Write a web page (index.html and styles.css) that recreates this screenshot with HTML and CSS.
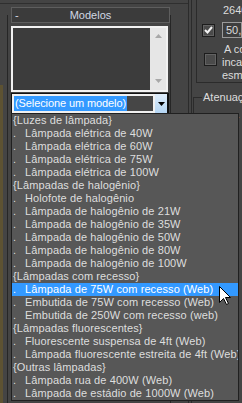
FILE: index.html
```html
<!DOCTYPE html>
<html>
<head>
<meta charset="utf-8">
<link rel="stylesheet" href="styles.css">
</head>
<body>
<div class="app">
  <div class="left-area">
    <div class="topbar"></div>
    <div class="left-body">
      <div class="edge"></div>
      <div class="rollout">
        <div class="roll-head"><span class="minus">-</span><span class="title">Modelos</span><span></span></div>
        <div class="roll-frame">
          <div class="listbox">
            <div class="lb-scroll">
              <svg width="7" height="4" viewBox="0 0 7 4"><path d="M0 4 L3.5 0 L7 4 Z" fill="#a8a8a8"/></svg>
              <svg width="7" height="4" viewBox="0 0 7 4"><path d="M0 0 L7 0 L3.5 4 Z" fill="#a8a8a8"/></svg>
            </div>
          </div>
          <div class="combo">
            <div class="combo-field"><span class="combo-sel">(Selecione um modelo)</span></div>
            <div class="combo-btn"><svg width="7" height="4" viewBox="0 0 7 4"><path d="M0 0 L7 0 L3.5 4 Z" fill="#000"/></svg></div>
          </div>
        </div>
      </div>
    </div>
  </div>
  <div class="side">
    <div class="side-inner">
      <div class="grp1">
        <div class="val">2640</div>
        <div class="row-a">
          <span class="chk on"><svg width="9" height="8" viewBox="0 0 9 8"><path d="M1 4 L3.5 6.5 L8 1" fill="none" stroke="#f4f4f4" stroke-width="2"/></svg></span>
          <span class="input">50,0</span>
        </div>
        <div class="lbl-a">A cor</div>
        <div class="row-b">
          <span class="chk"></span>
          <span class="lbl-b">incandescente<br>esmaecer</span>
        </div>
      </div>
      <div class="grp2">
        <span class="legend">Atenuação</span>
        <div class="row-c"><span class="chk"></span><span class="usar">Usar</span></div>
      </div>
    </div>
  </div>
</div>

<div class="dropdown">
  <div class="item grp">{Luzes de lâmpada}</div>
  <div class="item"><span class="dot">.</span>Lâmpada elétrica de 40W</div>
  <div class="item"><span class="dot">.</span>Lâmpada elétrica de 60W</div>
  <div class="item"><span class="dot">.</span>Lâmpada elétrica de 75W</div>
  <div class="item"><span class="dot">.</span>Lâmpada elétrica de 100W</div>
  <div class="item grp">{Lâmpadas de halogênio}</div>
  <div class="item"><span class="dot">.</span>Holofote de halogênio</div>
  <div class="item"><span class="dot">.</span>Lâmpada de halogênio de 21W</div>
  <div class="item"><span class="dot">.</span>Lâmpada de halogênio de 35W</div>
  <div class="item"><span class="dot">.</span>Lâmpada de halogênio de 50W</div>
  <div class="item"><span class="dot">.</span>Lâmpada de halogênio de 80W</div>
  <div class="item"><span class="dot">.</span>Lâmpada de halogênio de 100W</div>
  <div class="item grp">{Lâmpadas com recesso}</div>
  <div class="item sel"><span class="dot">.</span>Lâmpada de 75W com recesso (Web)</div>
  <div class="item"><span class="dot">.</span>Embutida de 75W com recesso (Web)</div>
  <div class="item"><span class="dot">.</span>Embutida de 250W com recesso (web)</div>
  <div class="item grp">{Lâmpadas fluorescentes}</div>
  <div class="item"><span class="dot">.</span>Fluorescente suspensa de 4ft (Web)</div>
  <div class="item"><span class="dot">.</span>Lâmpada fluorescente estreita de 4ft (Web)</div>
  <div class="item grp">{Outras lâmpadas}</div>
  <div class="item"><span class="dot">.</span>Lâmpada rua de 400W (Web)</div>
  <div class="item"><span class="dot">.</span>Lâmpada de estádio de 1000W (Web)</div>
</div>

<svg class="cursor" width="13" height="20" viewBox="0 0 13 20">
  <path d="M0.5 0.5 L0.5 16.5 L4.5 12.5 L7.5 18.5 L9.5 17.5 L6.5 11.5 L11.5 11.5 Z" fill="#fff" stroke="#000" stroke-width="1" stroke-linejoin="miter"/>
</svg>
</body>
</html>
```

FILE: styles.css
```css
* { box-sizing: border-box; }
html, body { margin: 0; padding: 0; }
body {
  width: 242px;
  height: 403px;
  overflow: hidden;
  position: relative;
  background: #444444;
  font-family: "Liberation Sans", Arial, sans-serif;
  font-size: 11px;
  line-height: 13px;
  color: #dcdcdc;
}
.app { display: flex; height: 403px; width: 242px; overflow: hidden; }

.left-area { width: 188px; flex: none; display: flex; flex-direction: column; }
.topbar { height: 4px; border-bottom: 1px solid #2f2f2f; }
.left-body { display: flex; flex: 1; }
.edge {
  width: 3px;
  flex: none;
  background: linear-gradient(#444444 0 81px, #5d5232 81px);
}
.rollout { margin-left: 4px; width: 164px; flex: none; padding-top: 3px; }
.roll-head {
  position: relative;
  z-index: 1;
  margin-left: 4px;
  width: 159px;
  height: 16px;
  border: 1px solid #5e5e5e;
  background: #3b3b3b;
  display: grid;
  grid-template-columns: 1fr auto 1fr;
  align-items: center;
  color: #d2d8e4;
  line-height: 13px;
}
.minus { padding-left: 3px; }
.roll-frame {
  margin-top: -8px;
  height: 388px;
  border-left: 1px solid #262626;
  border-right: 1px solid #262626;
  padding: 11px 0 0 3px;
}
.listbox {
  width: 157px;
  height: 66px;
  border: 2px solid #f2f2f2;
  background: #3c3c3c;
  display: flex;
  justify-content: flex-end;
}
.lb-scroll {
  width: 16px;
  background: #e6e6e6;
  display: flex;
  flex-direction: column;
  justify-content: space-between;
  align-items: center;
  padding: 6px 0 7px;
}
.lb-scroll svg { display: block; }
.combo {
  margin-top: 1px;
  width: 158px;
  height: 21px;
  display: flex;
  border: 1px solid #111111;
  border-right-width: 2px;
}
.combo-field {
  flex: 1;
  border: 2px solid #f0f0f0;
  background: #464646;
  display: flex;
  align-items: stretch;
}
.combo-sel {
  background: #3399ff;
  color: #ffffff;
  padding: 0 1px;
  line-height: 15px;
  letter-spacing: -0.1px;
  white-space: nowrap;
}
.combo-btn {
  width: 12px;
  background: linear-gradient(#e0eefb, #b4d5f3);
  display: flex;
  align-items: center;
  justify-content: center;
}
.combo-btn svg { display: block; }

.side { flex: 1; min-width: 0; border-left: 1px solid #2b2b2b; display: flex; overflow: hidden; }
.side-inner { margin-left: 2px; flex: 1; min-width: 0; border-left: 1px solid #2b2b2b; }
.grp1 {
  margin-left: 4px;
  height: 83px;
  border-left: 1px solid #2b2b2b;
  border-bottom: 1px solid #2b2b2b;
}
.val { padding: 4px 0 0 26px; height: 22px; white-space: nowrap; }
.row-a { display: flex; align-items: center; height: 16px; }
.chk {
  width: 13px;
  height: 13px;
  border: 1px solid #1c1c1c;
  background: #4a4a4a;
  box-shadow: inset 0 0 0 1px #626262;
  display: flex;
  align-items: center;
  justify-content: center;
  flex: none;
}
.chk svg { display: block; }
.row-a .chk { margin-left: 5px; }
.input {
  margin-left: 7px;
  height: 16px;
  flex: 1;
  border: 1px solid #9a9a9a;
  background: #3e3e3e;
  padding: 1px 0 0 3px;
  white-space: nowrap;
  overflow: hidden;
}
.lbl-a { padding: 5px 0 0 27px; height: 15px; white-space: nowrap; }
.row-b { display: flex; align-items: flex-start; }
.row-b .chk { margin-left: 7px; }
.lbl-b { margin-left: 5px; padding-top: 3px; white-space: nowrap; }
.grp2 {
  margin-left: 1px;
  margin-top: 14px;
  border-left: 1px solid #2b2b2b;
  border-top: 1px solid #2b2b2b;
}
.legend {
  display: inline-block;
  margin: -7px 0 0 8px;
  padding: 0 1px;
  background: #444444;
  white-space: nowrap;
  vertical-align: top;
}
.row-c { display: flex; align-items: center; margin-top: 2px; }
.row-c .chk { margin-left: 4px; }
.usar { margin-left: 5px; }

.dropdown {
  position: absolute;
  left: 11px;
  top: 113px;
  width: 228px;
  height: 288px;
  border: 1px solid #202020;
  background: #575757;
  overflow: hidden;
}
.item {
  height: 13px;
  line-height: 13px;
  padding-left: 1px;
  white-space: nowrap;
  color: #dedede;
  letter-spacing: 0.1px;
}
.dot { display: inline-block; width: 12px; }
.item.sel { background: #3399ff; color: #ffffff; }

.cursor { position: absolute; left: 219px; top: 286px; display: block; }
```
